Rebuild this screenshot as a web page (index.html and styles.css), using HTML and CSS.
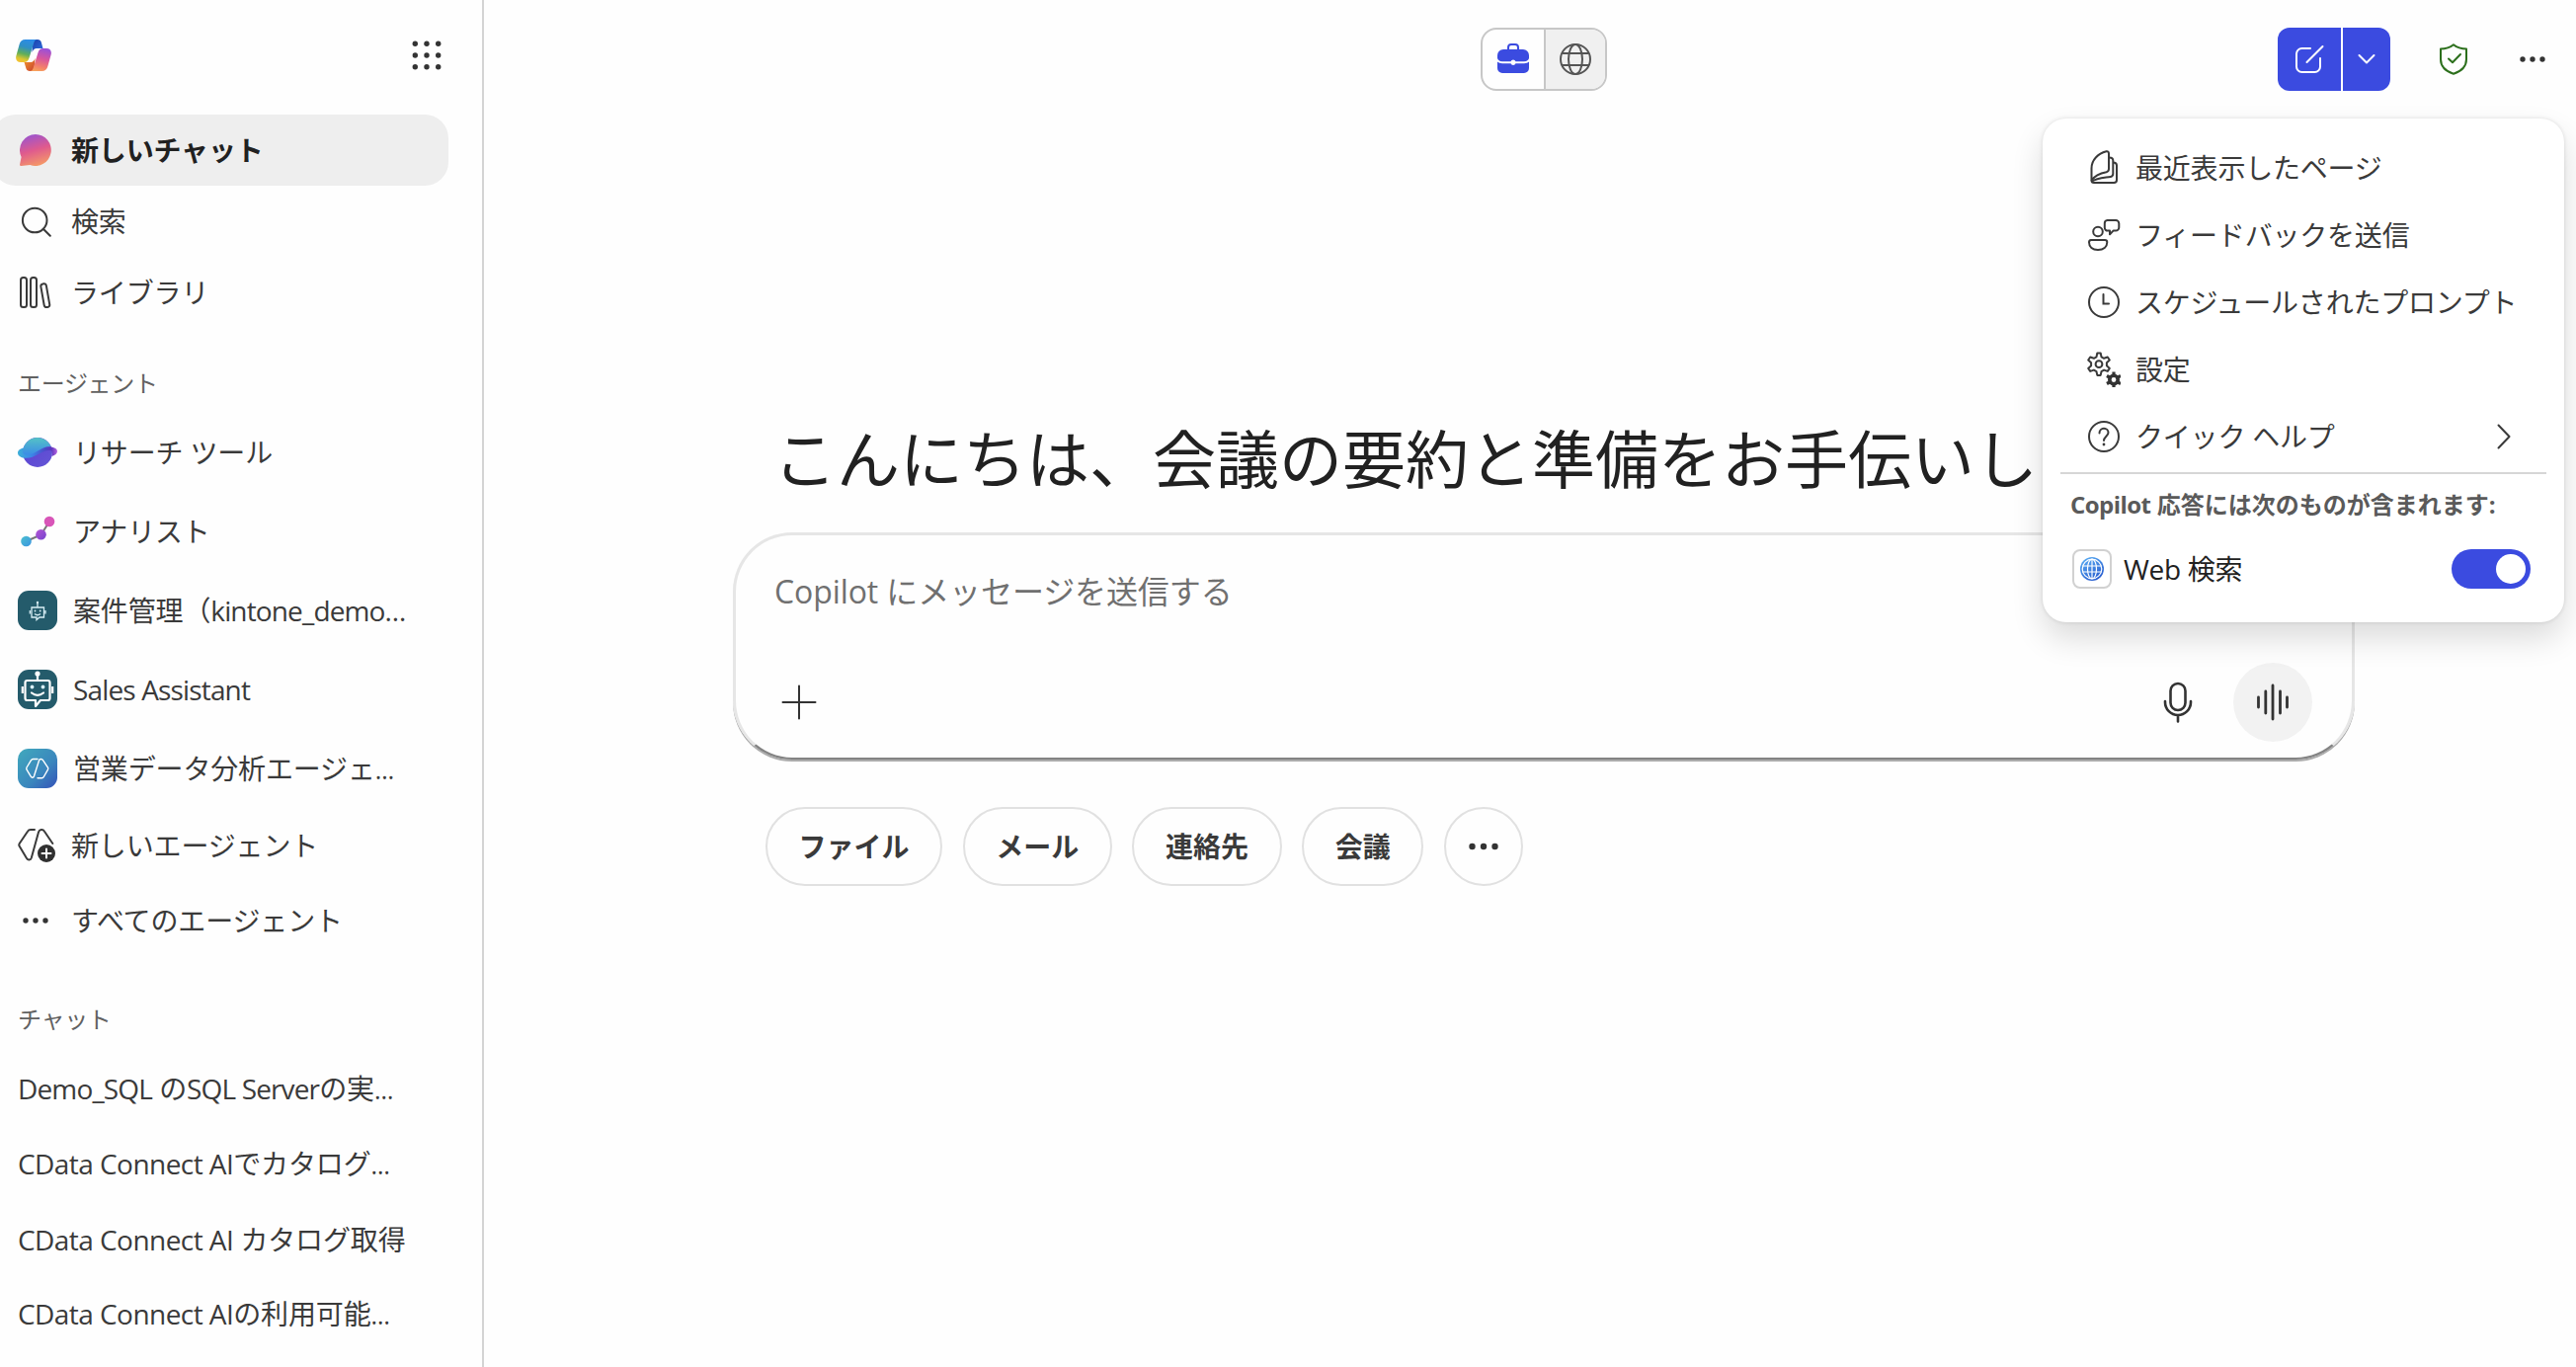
FILE: index.html
```html
<!DOCTYPE html>
<html lang="ja">
<head>
<meta charset="utf-8">
<title>Copilot</title>
<link rel="stylesheet" href="styles.css">
</head>
<body>
<div class="app">
  <nav class="sidebar">
    <div class="sidebar-head">
      <svg class="logo" width="36" height="32" viewBox="0 0 36 32">
        <defs>
          <linearGradient id="lgA" x1="0.6" y1="0" x2="0.35" y2="1"><stop offset="0" stop-color="#2b8ce8"/><stop offset=".35" stop-color="#2f8fc4"/><stop offset=".65" stop-color="#5fae5a"/><stop offset=".88" stop-color="#d9c531"/><stop offset="1" stop-color="#f2c230"/></linearGradient>
          <linearGradient id="lgB" x1="0.65" y1="0" x2="0.4" y2="1"><stop offset="0" stop-color="#9a50d8"/><stop offset=".45" stop-color="#d9579b"/><stop offset=".8" stop-color="#f3806a"/><stop offset="1" stop-color="#f6a05c"/></linearGradient>
          <linearGradient id="lgC" x1="0" y1="0" x2="1" y2="1"><stop offset="0" stop-color="#1a3fa8"/><stop offset="1" stop-color="#2f6fe0"/></linearGradient>
          <linearGradient id="lgD" x1="0" y1="0" x2="1" y2="1"><stop offset="0" stop-color="#f29a2e"/><stop offset="1" stop-color="#c9402f"/></linearGradient>
        </defs>
        <path fill="url(#lgC)" d="M17 0h5c2 0 3.200 1 3.800 2.800L27.500 9H21c-2 0-3.500 1.500-4.500 4z"/>
        <path fill="url(#lgD)" d="M18.500 32h-4.300c-2 0-3.200-1-3.800-2.800L8.500 23H15c2 0 3.500-1.500 4.500-4z"/>
        <path fill="url(#lgA)" d="M9.500 0H22c-2 0-3 1.200-3.600 3l-5 16c-.8 2.500-2.600 4-5 4H5c-4 0-5.600-2.800-4.600-6.500L3.600 5C4.500 1.800 6.500 0 9.500 0z"/>
        <path fill="url(#lgB)" d="M26.500 32H14c2 0 3-1.200 3.600-3l5-16c.8-2.500 2.600-4 5-4H31c4 0 5.600 2.800 4.600 6.500L32.400 27c-.9 3.200-2.900 5-5.900 5z"/>
      </svg>
      <svg class="waffle" width="30" height="30" viewBox="0 0 30 30" fill="#333"><circle cx="3.300" cy="3.300" r="2.700"/><circle cx="15" cy="3.300" r="2.700"/><circle cx="26.700" cy="3.300" r="2.700"/><circle cx="3.300" cy="15" r="2.700"/><circle cx="15" cy="15" r="2.700"/><circle cx="26.700" cy="15" r="2.700"/><circle cx="3.300" cy="26.700" r="2.700"/><circle cx="15" cy="26.700" r="2.700"/><circle cx="26.700" cy="26.700" r="2.700"/></svg>
    </div>

    <a class="row row-nav row-active">
      <span class="icon"><svg width="32" height="32" viewBox="0 0 32 32"><defs><linearGradient id="chatG" x1=".3" y1="0" x2=".6" y2="1"><stop offset="0" stop-color="#9a54cf"/><stop offset=".5" stop-color="#df5a8e"/><stop offset="1" stop-color="#f59a66"/></linearGradient></defs><path fill="url(#chatG)" d="M16 0a16 16 0 1 1-5.500 31.100L1.500 32c-1 .1-1.700-.8-1.400-1.700L1.600 23A16 16 0 0 1 16 0z"/></svg></span>
      <span>新しいチャット</span>
    </a>
    <a class="row row-nav">
      <span class="icon"><svg width="32" height="32" viewBox="0 0 32 32" fill="none" stroke="#3a3a3a" stroke-width="2" stroke-linecap="round"><circle cx="15.200" cy="15" r="12.300"/><path d="M23.800 23.800l7 7"/></svg></span>
      <span>検索</span>
    </a>
    <a class="row row-nav">
      <span class="icon"><svg width="32" height="32" viewBox="0 0 32 32" fill="none" stroke="#3a3a3a" stroke-width="2"><rect x="1" y="1" width="6" height="30" rx="2.500"/><rect x="11" y="1" width="6" height="30" rx="2.500"/><rect x="23" y="7.200" width="5.600" height="24" rx="2.500" transform="rotate(-10 25.800 19.200)"/></svg></span>
      <span>ライブラリ</span>
    </a>

    <h2 class="group-title">エージェント</h2>
    <a class="row row-agent">
      <span class="icon"><svg width="40" height="40" viewBox="0 0 40 40"><defs><linearGradient id="plA" x1="0" y1="0" x2="0" y2="1"><stop offset="0" stop-color="#55c3c6"/><stop offset="1" stop-color="#3b8be6"/></linearGradient><linearGradient id="plB" x1="0" y1="0" x2="1" y2="1"><stop offset="0" stop-color="#5a3fd0"/><stop offset="1" stop-color="#6456d6"/></linearGradient><linearGradient id="plC" x1="0" y1="0" x2="1" y2="0"><stop offset="0" stop-color="#3eb0d8"/><stop offset=".35" stop-color="#3c86e8"/><stop offset=".7" stop-color="#4a49c8"/><stop offset=".85" stop-color="#5c35bd"/><stop offset="1" stop-color="#b765e0"/></linearGradient></defs><circle cx="20" cy="20" r="15" fill="url(#plB)"/><path fill="url(#plC)" d="M6 15.500C2.500 16 0 18 0 20.500c0 3.200 3.500 5.300 8.500 5.300C18 25.800 22 19 31 18c3.500-.4 4.500 1 3.500 6 3.300-1 5.500-2.800 5.500-5 0-3-3.500-4.500-8-4.500z"/><path fill="url(#plA)" d="M5.200 17.500C6.500 10.500 12.500 5 20 5c6 0 11 3.500 13.500 9C24 13.500 19 22 10 22.500 6 22.700 4.500 20.500 5.200 17.500z"/></svg></span>
      <span>リサーチ ツール</span>
    </a>
    <a class="row row-agent">
      <span class="icon"><svg width="40" height="40" viewBox="0 0 40 40"><defs><linearGradient id="anA" x1="0" y1="0" x2="1" y2="1"><stop offset="0" stop-color="#4cc0d0"/><stop offset="1" stop-color="#3a94e0"/></linearGradient><linearGradient id="anB" x1="0" y1="0" x2="1" y2="1"><stop offset="0" stop-color="#b556d6"/><stop offset="1" stop-color="#7443cc"/></linearGradient></defs><path d="M8.500 30l15-6.500L32 10" fill="none" stroke="#777" stroke-width="2"/><circle cx="8.500" cy="30" r="5.300" fill="url(#anA)"/><circle cx="23.500" cy="23.300" r="5.300" fill="url(#anB)"/><circle cx="32" cy="10" r="5.300" fill="#d855b8"/></svg></span>
      <span>アナリスト</span>
    </a>
    <a class="row row-agent">
      <span class="icon"><svg width="40" height="40" viewBox="0 0 40 40"><rect width="40" height="40" rx="11" fill="#245b6b"/><g fill="none" stroke="#d7eef5" stroke-width="1.300"><path d="M20 17v-4.500M14 17h12.500v10H22l-3 2.500V27h-5zM12.300 20v3.500M28 20v3.500"/><path d="M17 23.500q3 2.500 6 0"/></g><circle cx="20" cy="12" r="1.200" fill="#d7eef5"/><circle cx="17.500" cy="20.500" r=".9" fill="#d7eef5"/><circle cx="22.700" cy="20.500" r=".9" fill="#d7eef5"/></svg></span>
      <span>案件管理（<span class="latin">kintone_demo…</span></span>
    </a>
    <a class="row row-agent">
      <span class="icon"><svg width="40" height="40" viewBox="0 0 40 40"><rect width="40" height="40" rx="11" fill="#245b6b"/><g fill="none" stroke="#fff" stroke-width="2.200" stroke-linejoin="round"><path d="M20 11V5M9.500 11h21a2 2 0 0 1 2 2v16a2 2 0 0 1-2 2H23l-5 6v-6H9.500a2 2 0 0 1-2-2V13a2 2 0 0 1 2-2zM4.800 17v7M35.200 17v7"/><path d="M14 23.500q6 4.600 12 0" stroke-linecap="round"/></g><circle cx="20" cy="4" r="2.600" fill="#fff"/><circle cx="14.500" cy="17.500" r="1.900" fill="#d7eef5"/><circle cx="25.500" cy="17.500" r="1.900" fill="#d7eef5"/></svg></span>
      <span class="latin">Sales Assistant</span>
    </a>
    <a class="row row-agent">
      <span class="icon"><svg width="40" height="40" viewBox="0 0 40 40"><defs><linearGradient id="bzG" x1="0" y1="0" x2="1" y2="1"><stop offset="0" stop-color="#41a9bd"/><stop offset=".6" stop-color="#3a86bd"/><stop offset="1" stop-color="#3451b8"/></linearGradient></defs><rect width="40" height="40" rx="11" fill="url(#bzG)"/><path fill="none" stroke="#fff" stroke-width="1.400" stroke-linecap="round" stroke-linejoin="round" d="M20 10.500h-4.500c-1 0-1.600.4-2 1.200L9 19c-.4.800-.4 1.400 0 2.200l4.200 7c.8 1.400 2.600 1.500 3.200-.2L21.500 12c.6-1.800 3-2 4-.3l5 7.500c.4.700.4 1.300 0 2l-4.200 7.300c-.4.800-1 1.200-2 1.200H20"/></svg></span>
      <span>営業データ分析エージェ<span class="latin-cut">…</span></span>
    </a>
    <a class="row row-tool">
      <span class="icon"><svg width="40" height="36" viewBox="0 0 40 36"><path fill="none" stroke="#3a3a3a" stroke-width="2" stroke-linecap="round" stroke-linejoin="round" d="M17 2h-4c-1.500 0-2.300.5-3 1.700L1.700 16c-.6 1-.6 1.800 0 2.800L9 31c1.200 2 4 2 4.800-.5L21 4.500c.8-3 4.500-3.300 6-.8L35.300 16"/><circle cx="29" cy="26" r="10.500" fill="#fff"/><circle cx="29" cy="26" r="9" fill="#303030"/><path stroke="#fff" stroke-width="2" stroke-linecap="round" d="M29 21.500v9M24.500 26h9"/></svg></span>
      <span>新しいエージェント</span>
    </a>
    <a class="row row-tool row-all">
      <span class="icon"><svg width="36" height="32" viewBox="0 0 36 32" fill="#333"><circle cx="8" cy="16" r="2.700"/><circle cx="18" cy="16" r="2.700"/><circle cx="28" cy="16" r="2.700"/></svg></span>
      <span>すべてのエージェント</span>
    </a>

    <h2 class="group-title group-chats">チャット</h2>
    <a class="row row-chat"><span><span class="latin">Demo_SQL</span> の<span class="latin">SQL Server</span>の実<span class="latin-cut">…</span></span></a>
    <a class="row row-chat"><span><span class="latin-wide">CData Connect AI</span>でカタログ<span class="latin-cut">…</span></span></a>
    <a class="row row-chat"><span><span class="latin-wide">CData Connect AI</span> カタログ取得</span></a>
    <a class="row row-chat"><span><span class="latin-wide">CData Connect AI</span>の利用可能<span class="latin-cut">…</span></span></a>
  </nav>

  <div class="main">
    <header class="topbar">
      <div class="mode">
        <div class="mode-btn"><svg width="32" height="32" viewBox="0 0 32 32"><path fill="none" stroke="#3b4be0" stroke-width="2" d="M11 7V4a3 3 0 0 1 3-3h4a3 3 0 0 1 3 3v3"/><path fill="#3b4be0" d="M6 6h20a6 6 0 0 1 6 6v2.500c0 2-2 3.700-5 3.700h-8.500a2.700 2.700 0 0 0-5 0H5c-3 0-5-1.700-5-3.700V12a6 6 0 0 1 6-6z"/><path fill="#3b4be0" d="M0 18.500c1.300 1 3 1.700 5 1.700h8.500a2.700 2.700 0 0 0 5 0H27c2 0 3.700-.7 5-1.700V25a5 5 0 0 1-5 5H5a5 5 0 0 1-5-5z"/></svg></div>
        <div class="mode-btn mode-web"><svg width="32" height="32" viewBox="0 0 32 32" fill="none" stroke="#555" stroke-width="2"><circle cx="16" cy="16" r="15"/><ellipse cx="16" cy="16" rx="7" ry="15"/><path d="M2.500 10h27M2.500 22h27"/></svg></div>
      </div>
      <div class="actions">
        <div class="split">
          <div class="split-main"><svg width="30" height="30" viewBox="0 0 30 30" fill="none" stroke="#fff" stroke-width="2" stroke-linecap="round"><path d="M16 4H7.500A5.500 5.500 0 0 0 2 9.500v13A5.500 5.500 0 0 0 7.500 28h13a5.500 5.500 0 0 0 5.500-5.500V14M12.500 18L28.500 2"/></svg></div>
          <div class="split-more"><svg width="18" height="12" viewBox="0 0 18 12" fill="none" stroke="#fff" stroke-width="2" stroke-linecap="round" stroke-linejoin="round"><path d="M1.500 2L9 9.500 16.500 2"/></svg></div>
        </div>
        <svg class="shield" width="28" height="32" viewBox="0 0 28 32" fill="none" stroke="#2c6f1c" stroke-width="2" stroke-linejoin="round"><path d="M14 1.200C17.500 4 21.500 5.400 27 5.600V16c0 7-4.500 12-13 14.800C5.500 28 1 23 1 16V5.600C6.500 5.400 10.500 4 14 1.200z"/><path stroke-linecap="round" d="M9 15.500l4 3.700L21 11"/></svg>
        <svg class="more" width="28" height="8" viewBox="0 0 28 8" fill="#333"><circle cx="4" cy="4" r="2.700"/><circle cx="14" cy="4" r="2.700"/><circle cx="24" cy="4" r="2.700"/></svg>
      </div>
    </header>

    <section class="stage">
      <h1 class="greeting">こんにちは、会議の要約と準備をお手伝いし</h1>
      <div class="composer">
        <div class="placeholder">Copilot にメッセージを送信する</div>
        <div class="composer-bar">
          <svg width="36" height="36" viewBox="0 0 36 36" stroke="#333" stroke-width="2" stroke-linecap="round"><path d="M18 1.500v33M1.500 18h33"/></svg>
          <div class="voice">
            <svg width="30" height="42" viewBox="0 0 30 42" fill="none" stroke="#333" stroke-width="2.600" stroke-linecap="round"><rect x="7.500" y="2" width="15" height="27" rx="7.500"/><path d="M2 20v1a13 13 0 0 0 26 0v-1M15 34.500V40.500"/></svg>
            <div class="wave"><svg width="34" height="40" viewBox="0 0 34 40" stroke="#333" stroke-width="2.800" stroke-linecap="round"><path d="M2.500 15v10M9.800 9v22M17 3v34M24.500 9v22M31.500 15v10"/></svg></div>
          </div>
        </div>
      </div>
      <div class="chips">
        <div class="chip">ファイル</div>
        <div class="chip">メール</div>
        <div class="chip">連絡先</div>
        <div class="chip">会議</div>
        <div class="chip chip-more"><svg width="34" height="8" viewBox="0 0 34 8" fill="#333"><circle cx="5.500" cy="4" r="3.200"/><circle cx="17" cy="4" r="3.200"/><circle cx="28.500" cy="4" r="3.200"/></svg></div>
      </div>
    </section>
  </div>

  <div class="menu">
    <div class="menu-item"><svg width="34" height="36" viewBox="0 0 34 36" fill="none" stroke="#3a3a3a" stroke-width="2" stroke-linejoin="round"><path d="M22 3.500V19c0 1.800-.8 2.800-2.500 3.200C13 23.500 8 25.500 4.500 30.500V18.500C4.500 10 11 3.500 19.500 1.300c1.600-.4 2.500.6 2.500 2.200z"/><path d="M22.500 7.500c2.700 0 3.800 1 3.800 3V24c0 1.700-.8 2.600-2.500 2.900C15.500 28.200 9.500 28.500 5 31.500"/><path d="M26.300 12.500c2.600 0 3.700 1 3.700 3V30.300c0 1.800-1 2.800-2.800 2.800H7c-1.700 0-2.500-.9-2.500-2.600"/></svg><span>最近表示したページ</span></div>
    <div class="menu-item"><svg width="34" height="36" viewBox="0 0 34 36" fill="none" stroke="#3a3a3a" stroke-width="2" stroke-linejoin="round"><circle cx="11" cy="14.500" r="4.800"/><path d="M4 23h14a2.300 2.300 0 0 1 2.300 2.300C20.300 30 16.500 33 11 33S2 30 2 25.300A2.300 2.300 0 0 1 4 23z"/><path d="M20.500 3h8.500a3.300 3.300 0 0 1 3.300 3.300v4a3.300 3.300 0 0 1-3.300 3.300H26.500L23 17.300v-3.700h-2.200a3 3 0 0 1-3-3V6a3 3 0 0 1 2.700-3z"/></svg><span>フィードバックを送信</span></div>
    <div class="menu-item"><svg width="34" height="36" viewBox="0 0 34 36" fill="none" stroke="#3a3a3a" stroke-width="2" stroke-linecap="round"><circle cx="17" cy="18" r="15"/><path d="M16.500 10v9.500h5.500"/></svg><span>スケジュールされたプロンプト</span></div>
    <div class="menu-item"><svg width="34" height="36" viewBox="0 0 34 36"><g fill="none" stroke="#3a3a3a" stroke-width="2" stroke-linejoin="round"><path d="M10.300 1.500h3.400l.8 3.800 2.600 1.500 3.700-1.300 2 3-2.900 2.700v3l2.900 2.700-2 3-3.700-1.300-2.600 1.500-.8 3.800h-3.400l-.8-3.800-2.600-1.500-3.700 1.300-2-3 2.900-2.700v-3L1.200 8.500l2-3 3.700 1.300 2.600-1.500z"/><circle cx="12" cy="12.700" r="3.400"/></g><circle cx="27" cy="28.500" r="4.200" fill="none" stroke="#333" stroke-width="3.600"/><path stroke="#333" stroke-width="3.200" d="M27 20.500v3M27 33.500v3M20 24.500l2.600 1.500M31.400 31l2.600 1.500M20 32.500l2.600-1.500M31.400 26l2.600-1.500"/></svg><span>設定</span></div>
    <div class="menu-item"><svg width="34" height="36" viewBox="0 0 34 36" fill="none" stroke="#3a3a3a" stroke-width="2" stroke-linecap="round"><circle cx="17" cy="18" r="15"/><path d="M12.500 14.500c0-2.800 2-4.700 4.500-4.700s4.500 1.900 4.500 4.300c0 3.400-4.500 4-4.500 8"/><circle cx="17" cy="26" r=".7" fill="#3a3a3a" stroke-width="1.400"/></svg><span>クイック ヘルプ</span><svg class="menu-arrow" width="14" height="26" viewBox="0 0 14 26" fill="none" stroke="#3a3a3a" stroke-width="2" stroke-linecap="round" stroke-linejoin="round"><path d="M1.500 1.500L12.500 13l-11 11.500"/></svg></div>
    <div class="menu-title"><span class="latin-wide">Copilot</span> 応答には次のものが含まれます<span class="latin">:</span></div>
    <div class="menu-web">
      <span class="web-icon"><svg width="24" height="24" viewBox="0 0 24 24"><defs><linearGradient id="wbG" x1="0" y1="0" x2=".6" y2="1"><stop offset="0" stop-color="#5fb4f6"/><stop offset="1" stop-color="#2a5fd0"/></linearGradient></defs><circle cx="12" cy="12" r="12" fill="url(#wbG)"/><g fill="none" stroke="#fff" stroke-width="1.200"><circle cx="12" cy="12" r="9.800"/><ellipse cx="12" cy="12" rx="4.500" ry="9.800"/><path d="M2.500 9h19M2.500 15h19M12 2v20"/></g></svg></span>
      <span class="web-label">Web 検索</span>
      <span class="switch"></span>
    </div>
  </div>
</div>
</body>
</html>
```
FILE: styles.css
```css
* { box-sizing: border-box; }

body {
  margin: 0;
  background: #fefefe;
  color: #3a3a3a;
  font-family: "Open Sans", "Noto Sans CJK JP", sans-serif;
  font-size: 28px;
  line-height: 40px;
}

svg { display: block; flex: none; }

.app {
  position: relative;
  display: flex;
  width: 2608px;
  height: 1384px;
  overflow: hidden;
}

.latin { letter-spacing: -0.85px; }
.latin-wide { letter-spacing: -0.55px; }
.latin-cut { letter-spacing: 0; font-size: 25px; }

/* Sidebar */
.sidebar {
  flex: none;
  width: 490px;
  border-right: 2px solid #d4d4d4;
}

.sidebar-head {
  display: flex;
  justify-content: space-between;
  align-items: center;
  height: 116px;
  padding: 0 41px 4px 16px;
}

.row {
  display: flex;
  align-items: center;
  white-space: nowrap;
  letter-spacing: -0.15px;
}

.row .icon {
  display: flex;
  flex: none;
  width: 54px;
}

.row-nav { height: 72px; padding-left: 20px; }
.row-nav .icon { width: 52px; }

.row-active {
  width: 462px;
  margin-left: -8px;
  padding-left: 28px;
  border-radius: 24px;
  background: #eeeeee;
  color: #212121;
  font-weight: 700;
}

.group-title {
  height: 86px;
  margin: 0;
  padding: 28px 0 0 18px;
  color: #616161;
  font-size: 24px;
  font-weight: 400;
  letter-spacing: -0.3px;
  line-height: 56px;
}

.group-chats { height: 96px; line-height: 68px; }

.row-agent { height: 80px; padding-left: 18px; }
.row-agent .icon { width: 56px; }
.row-tool { height: 76px; padding-left: 18px; }
.row-chat { height: 76px; padding: 0 0 3px 18px; }

/* Main column */
.main {
  display: flex;
  flex: 1;
  flex-direction: column;
  min-width: 0;
}

.topbar {
  display: flex;
  justify-content: space-between;
  align-items: center;
  height: 120px;
  padding: 0 30px 0 1009px;
}

.mode {
  display: flex;
  width: 128px;
  height: 64px;
  overflow: hidden;
  border: 2px solid #c7c7c7;
  border-radius: 16px;
}

.mode-btn {
  display: flex;
  flex: none;
  align-items: center;
  justify-content: center;
  width: 62px;
}

.mode-web {
  border-left: 2px solid #c7c7c7;
  background: #f0f0f0;
}

.actions { display: flex; align-items: center; }

.split {
  display: flex;
  gap: 2px;
  height: 64px;
  overflow: hidden;
  border-radius: 12px;
}

.split-main, .split-more {
  display: flex;
  align-items: center;
  justify-content: center;
  background: #3b4be0;
}

.split-main { width: 64px; }
.split-more { width: 48px; }
.shield { margin-left: 50px; }
.more { margin-left: 52px; }

.stage { width: 1642px; padding: 301px 0 0 252px; }

.greeting {
  height: 118px;
  margin: 0 0 0 41px;
  color: #212121;
  font-size: 64px;
  font-weight: 400;
  line-height: 88px;
  white-space: nowrap;
}

.composer {
  display: flex;
  flex-direction: column;
  justify-content: space-between;
  width: 1642px;
  height: 230px;
  padding: 35px 40px 16px 39px;
  border: 3px solid #e6e6e6;
  border-bottom: 2px solid #838383;
  border-radius: 60px;
  box-shadow: 0 2px 0 #ababab;
}

.placeholder { color: #707070; font-size: 32px; line-height: 44px; letter-spacing: -0.1px; }

.composer-bar {
  display: flex;
  align-items: center;
  justify-content: space-between;
  padding-left: 7px;
}

.voice { display: flex; align-items: center; gap: 41px; }

.wave {
  display: flex;
  align-items: center;
  justify-content: center;
  width: 80px;
  height: 80px;
  border-radius: 50%;
  background: #f2f2f2;
}

.chips { display: flex; gap: 20.5px; padding: 48px 0 0 33px; }

.chip {
  height: 80px;
  padding: 0 31.6px;
  border: 2px solid #e1e1e1;
  border-radius: 40px;
  font-weight: 700;
  line-height: 76px;
}

.chip-more {
  display: flex;
  align-items: center;
  justify-content: center;
  width: 80px;
  padding: 0;
}

/* Overflow menu */
.menu {
  position: absolute;
  top: 120px;
  left: 2068px;
  width: 528px;
  height: 510px;
  padding-top: 16px;
  border-radius: 24px;
  background: #fff;
  box-shadow: 0 0 4px rgba(0, 0, 0, 0.12), 0 16px 32px rgba(0, 0, 0, 0.14);
  white-space: nowrap;
}

.menu-item {
  display: flex;
  align-items: center;
  gap: 15px;
  height: 68px;
  padding: 0 54px 0 45px;
  letter-spacing: -0.2px;
}

.menu-item span { flex: none; }
.menu-arrow { margin-left: auto; }

.menu-title {
  height: 66px;
  margin: 2px 18px 0;
  padding-left: 10px;
  border-top: 2px solid #d6d6d6;
  color: #5a5a5a;
  font-size: 24px;
  font-weight: 700;
  line-height: 62px;
}

.menu-web {
  display: flex;
  align-items: center;
  height: 64px;
  padding: 0 34px 0 30px;
}

.web-icon {
  display: flex;
  align-items: center;
  justify-content: center;
  width: 40px;
  height: 40px;
  border: 2px solid #d1d1d1;
  border-radius: 8px;
}

.web-label { margin-left: 12px; color: #212121; letter-spacing: -0.3px; }

.switch {
  width: 80px;
  height: 40px;
  margin-left: auto;
  padding: 5px 5px 5px 45px;
  border-radius: 20px;
  background: #3b4be0;
}

.switch::before {
  content: "";
  display: block;
  width: 30px;
  height: 30px;
  border-radius: 50%;
  background: #fff;
}
```
